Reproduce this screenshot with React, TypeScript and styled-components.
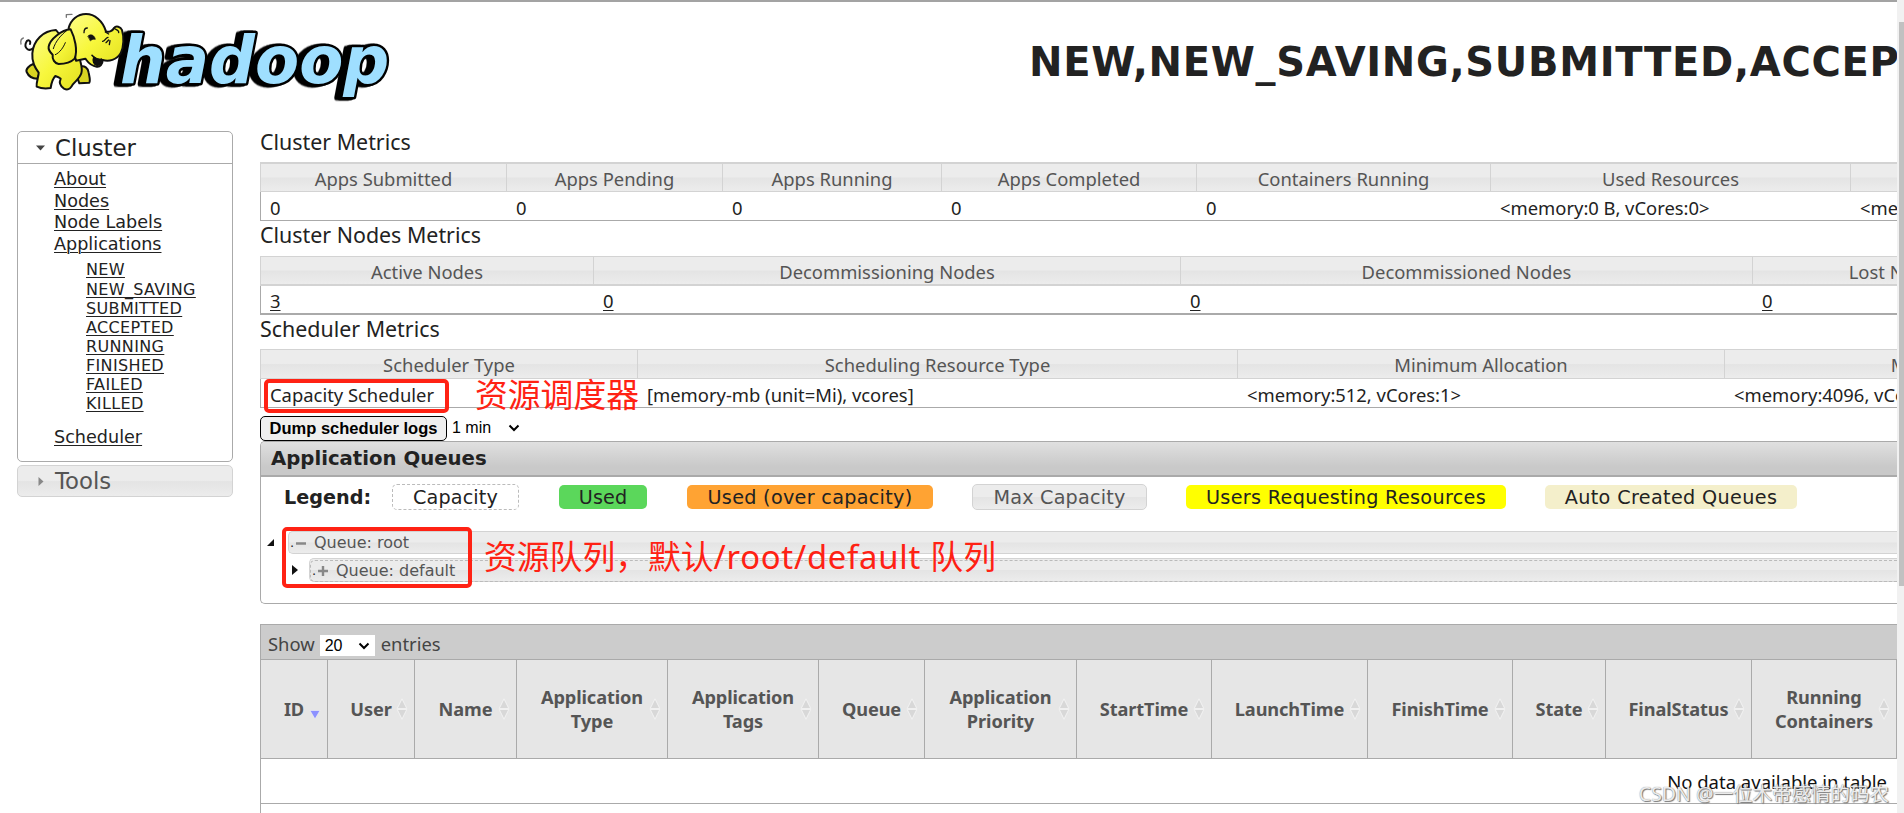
import React from "react";
import styled, { createGlobalStyle, css } from "styled-components";

const verdana = `"DejaVu Sans", Verdana, sans-serif`;
const segoe = `"Noto Sans", "Noto Sans CJK SC", sans-serif`;
const arial = `"Liberation Sans", Arial, sans-serif`;

const Global = createGlobalStyle`
  html, body { margin: 0; background: #fff; overflow: hidden; }
  *, *::before, *::after { box-sizing: border-box; }
  a { color: inherit; text-decoration: underline; text-decoration-thickness: 1px; text-underline-offset: 2px; }
`;

const glass = css`
  background: linear-gradient(#ececec 0%, #ececec 48%, #e4e4e4 52%, #ececec 100%);
`;

const Page = styled.div`
  position: relative;
  display: flex;
  width: 1904px;
  height: 813px;
  overflow: hidden;
  color: #222;
  background: #fff;
  font-family: ${verdana};
`;

const Content = styled.div`
  width: 1897px;
  overflow: hidden;
  border-top: 2px solid #a3a3a3;
`;

const ScrollTrack = styled.div`
  flex: 1;
  padding: 22px 0 0 2px;
  background: #f1f1f1;
`;

const ScrollThumb = styled.div`
  height: 564px;
  background: #c1c1c1;
`;

const Header = styled.header`
  display: flex;
  height: 120px;
`;

const Logo = styled.svg`
  display: block;
  flex: none;
  width: 420px;
  height: 120px;
  margin-top: -2px;
`;

const LogoText = styled.text`
  font: oblique bold 200px ${verdana};
  fill: #9fdfff;
  stroke: #000;
  stroke-width: 15px;
  stroke-linejoin: round;
  paint-order: stroke;
  filter: drop-shadow(-9px 2px 0 #000) drop-shadow(-9px 1px 0 #000);
`;

const Title = styled.h1`
  margin: 35px 0 0 609px;
  font-size: 40px;
  line-height: 50px;
  font-weight: bold;
  white-space: nowrap;
  letter-spacing: 0.68px;
`;

const Body = styled.div`
  display: flex;
`;

const Side = styled.nav`
  width: 216px;
  margin: 9px 27px 0 17px;
  flex: none;
`;

const SideHead = styled.div<{ $closed?: boolean }>`
  display: flex;
  align-items: center;
  height: ${(p) => (p.$closed ? 32 : 31)}px;
  padding-left: ${(p) => (p.$closed ? 20 : 18)}px;
  font-size: 22.8px;
  color: #222;
  ${(p) =>
    p.$closed &&
    css`
      ${glass}
      color: #555;
      border: 1px solid #d3d3d3;
      border-radius: 5px;
      margin-top: 3px;
    `}

  svg {
    margin-right: ${(p) => (p.$closed ? 11 : 10)}px;
  }
`;

const SideBox = styled.div`
  height: 331px;
  border: 1px solid #aaa;
  border-radius: 5px;
`;

const SideBody = styled.div`
  border-top: 1px solid #aaa;
  padding: 5px 0 0 36px;
`;

const NavItem = styled.div`
  height: 21.6px;
  font-size: 17.6px;
  line-height: 21.6px;
`;

const NavSub = styled.div`
  margin: 5px 0 13px;
  padding-left: 32px;
  font-size: 16px;
  line-height: 19.15px;
  letter-spacing: 0.35px;
`;

const Main = styled.main`
  width: 1637px;
  flex: none;
`;

const SectionTitle = styled.div<{ $gap: number; $top?: number }>`
  margin: ${(p) => p.$top ?? 0}px 0 ${(p) => p.$gap}px;
  height: 28px;
  font: 21.4px/28px ${segoe};
`;

const Grid = styled.div<{ $cols: string; $bottom: number }>`
  display: grid;
  width: 1637px;
  overflow: hidden;
  grid-template-columns: ${(p) => p.$cols};
  border-bottom: ${(p) => p.$bottom}px solid #aaa;
  font-family: ${segoe};
  font-size: 18.4px;
  white-space: nowrap;
`;

const HeadCell = styled.div<{ $t: number; $b: number; $h: number }>`
  ${glass}
  height: ${(p) => p.$h}px;
  display: flex;
  align-items: center;
  justify-content: center;
  padding-top: 1px;
  color: #555;
  border-top: ${(p) => p.$t}px solid #d3d3d3;
  border-bottom: ${(p) => p.$b}px solid #d3d3d3;
  border-left: 1px solid #d3d3d3;
`;

const Cell = styled.div<{ $h: number; $first: boolean }>`
  height: ${(p) => p.$h}px;
  display: flex;
  align-items: center;
  padding: 2px 0 0 9px;
  border-left: 1px solid ${(p) => (p.$first ? "#aaa" : "transparent")};
`;

const Controls = styled.div`
  display: flex;
  height: 33px;
  padding-top: 8px;
`;

const DumpButton = styled.button`
  width: 187px;
  height: 25px;
  padding: 0;
  border: 1px solid #000;
  border-radius: 5px;
  background: #efefef;
  color: #000;
  font: bold 16.5px/21px ${arial};
  white-space: nowrap;
`;

const Select = styled.div<{ $boxed?: boolean }>`
  display: flex;
  align-items: center;
  justify-content: space-between;
  color: #000;
  font: 16px/20px ${arial};
  ${(p) =>
    p.$boxed
      ? css`
          width: 55px;
          height: 21px;
          margin: 6px 6px 0 5px;
          padding: 1px 5px 0;
          background: #fff;
        `
      : css`
          width: 68px;
          height: 24px;
          margin-left: 5px;
        `}
`;

const Panel = styled.section`
  height: 163px;
  border: 1px solid #aaa;
  border-right: 0;
  border-radius: 5px 0 0 5px;
  overflow: hidden;
`;

const PanelHead = styled.div`
  height: 35px;
  padding: 0 0 0 10px;
  border-bottom: 2px solid #aaa;
  background: linear-gradient(#e0e0e0, #c9c9c9 75%);
  font-size: 19.7px;
  line-height: 34px;
  font-weight: bold;
`;

const LegendRow = styled.div`
  display: flex;
  align-items: center;
  height: 26px;
  margin-top: 7px;
  padding-left: 23px;
  font-size: 19.2px;
  white-space: nowrap;
`;

const LegendLabel = styled.b`
  width: 108px;
`;

const Chip = styled.span<{ $w: number; $gap: number; $kind: string; $track: number }>`
  width: ${(p) => p.$w}px;
  margin-right: ${(p) => p.$gap}px;
  letter-spacing: ${(p) => p.$track}px;
  flex: none;
  text-align: center;
  border-radius: 5px;
  height: 24px;
  line-height: 26px;
  ${(p) =>
    p.$kind === "dashed"
      ? css`
          height: 26px;
          border: 1px dashed #bbb;
        `
      : p.$kind === "glass"
      ? css`
          ${glass}
          height: 26px;
          border: 1px solid #d3d3d3;
          color: #555;
        `
      : css`
          background: ${p.$kind};
        `}
`;

const Tree = styled.div`
  margin-top: 21px;
  font-size: 16px;
  color: #555;
`;

const TreeLine = styled.div<{ $indent: number }>`
  display: flex;
  align-items: center;
  padding-left: ${(p) => p.$indent}px;
`;

const TreeBar = styled.div<{ $nested?: boolean }>`
  ${glass}
  display: flex;
  align-items: center;
  flex: 1;
  border: 1px solid #d3d3d3;
  border-right: 0;
  border-radius: 5px 0 0 5px;
  height: ${(p) => (p.$nested ? 24 : 23)}px;
  line-height: 21px;
`;

const TreeDash = styled.div`
  display: flex;
  align-items: center;
  flex: 1;
  height: 22px;
  margin-top: 1px;
  border: 1px dashed #bbb;
  border-right: 0;
  border-radius: 5px 0 0 5px;
`;

const TreeArrow = styled.svg`
  flex: none;
  margin-right: 14px;
`;

const NestedArrow = styled(TreeArrow)`
  margin-right: 11px;
`;

const TreeGap = styled.div`
  height: 4px;
`;

const TreeIcon = styled.svg`
  flex: none;
  margin: 0 8px 0 1px;
`;

const Dot = styled.span`
  width: 6px;
  flex: none;
  color: #222;
  font-size: 13px;
  padding-left: 1px;
`;

const Apps = styled.section`
  margin-top: 20px;
  border: 1px solid #aaa;
  border-right: 0;
  height: 220px;
  font-family: ${segoe};
`;

const AppsBar = styled.div`
  display: flex;
  align-items: center;
  height: 35px;
  padding: 0 0 0 7px;
  background: #ccc;
  color: #444;
  font-size: 18.4px;
  border-bottom: 1px solid #aaa;

  & > span {
    padding-top: 3px;
  }
`;

const AppsHead = styled.div`
  display: grid;
  grid-template-columns: 67px 87px 102px 151px 151px 106px 152px 135px 156px 145px 93px 146px 145px;
  height: 99px;
  background: #e6e6e6;
  border-bottom: 1px solid #aaa;
`;

const AppsTh = styled.div`
  position: relative;
  display: flex;
  align-items: center;
  justify-content: center;
  border-right: 1px solid #aaa;
  color: #555;
  font-weight: bold;
  font-size: 18.2px;
  line-height: 24px;
  text-align: center;
  letter-spacing: -0.1px;
`;

const SortMark = styled.svg`
  position: absolute;
  right: 6px;
  top: 38px;
`;

const EmptyRow = styled.div`
  height: 45px;
  padding: 9px 10px 0 0;
  border-bottom: 1px solid #aaa;
  color: #111;
  font-size: 18.5px;
  line-height: 28px;
  text-align: right;
`;

const RedBox = styled.div<{ $x: number; $y: number; $w: number; $h: number }>`
  position: absolute;
  left: ${(p) => p.$x}px;
  top: ${(p) => p.$y}px;
  width: ${(p) => p.$w}px;
  height: ${(p) => p.$h}px;
  border: 4px solid #ff2214;
  border-radius: 5px;
`;

const RedNote = styled.div<{ $x: number; $y: number }>`
  position: absolute;
  left: ${(p) => p.$x}px;
  top: ${(p) => p.$y}px;
  color: #ff2214;
  font: 32.8px/44px ${segoe};
  white-space: nowrap;

  span {
    letter-spacing: 0.75px;
  }
`;

const Watermark = styled.div`
  position: absolute;
  right: 15px;
  top: 780px;
  font: 19.5px/28px ${segoe};
  color: rgba(255, 255, 255, 0.85);
  text-shadow: 1px 1px 1px #777, 0 0 1px #777;
  white-space: nowrap;
`;

const Chevron = () => (
  <svg width="12" height="8" viewBox="0 0 12 8">
    <path d="M1.5 1.5 L6 6 L10.5 1.5" fill="none" stroke="#000" strokeWidth="2" />
  </svg>
);

const HadoopLogo = () => (
  <Logo viewBox="0 0 1260 360">
    <defs>
      <linearGradient id="skin" x1="0" y1="0" x2="1" y2="1">
        <stop offset="0" stopColor="#fdfd8a" />
        <stop offset="0.5" stopColor="#f7f73c" />
        <stop offset="1" stopColor="#e3df1e" />
      </linearGradient>
    </defs>
    <LogoText x="360" y="250" textLength="808" lengthAdjust="spacingAndGlyphs">
      hadoop
    </LogoText>
    <g fill="url(#skin)" stroke="#111" strokeWidth="6" strokeLinejoin="round" strokeLinecap="round">
      <path d="M98 146 C84 156 72 142 78 128 C82 117 94 120 90 132" fill="none" />
      <path d="M100 192 C88 196 76 208 80 216 C86 230 98 236 112 236 L124 206 Z" fill="#d9d422" />
      <path d="M240 200 C254 196 264 204 266 218 C268 230 272 240 268 248 L238 250 L228 222 Z" fill="#d9d422" />
      <path d="M168 90 C130 92 100 120 97 160 C95 188 106 204 116 218 C116 232 108 246 110 260 C124 266 140 266 152 264 C154 250 158 236 166 228 C172 230 178 232 182 236 C176 250 180 258 192 266 C204 272 212 266 218 254 C226 244 240 234 244 220 C248 206 244 196 240 180 Z" />
      <path d="M206 84 C212 60 232 42 258 42 C284 42 308 62 318 94 C328 98 338 92 342 84 C348 76 362 80 366 90 C372 110 372 140 362 160 C350 180 326 186 308 180 C308 192 300 202 290 200 C270 198 262 184 256 176 L228 182 Z" />
      <path d="M212 88 C184 90 150 118 146 140 C144 152 152 158 158 164 C156 178 164 190 176 192 C194 192 212 188 224 176 C234 150 224 112 212 88 Z" />
      <path d="M282 172 C278 182 282 194 292 196 C302 194 306 186 304 178 C294 182 288 178 282 172 Z" fill="#111" />
      <path d="M200 92 C184 104 166 124 160 146" fill="none" strokeWidth="3" />
      <path d="M196 128 C190 142 180 158 166 164" fill="none" strokeWidth="3" />
      <path d="M252 98 C252 88 256 84 262 84" fill="none" strokeWidth="4" />
      <path d="M316 96 L326 102 M308 124 C316 122 316 114 324 112 M318 128 L326 120 M328 134 L330 122" fill="none" strokeWidth="4" />
      <path d="M264 108 C272 100 284 106 286 118 C278 116 274 120 272 122 Z" fill="#111" strokeWidth="2" />
      <path d="M342 84 C346 90 358 88 356 98" fill="none" strokeWidth="4" />
      <path d="M276 166 C284 176 298 180 308 180" fill="none" strokeWidth="5" />
      <path d="M199 52 L199 44 L216 43 M63 132 C61 122 64 116 70 114" fill="none" stroke="#777" strokeWidth="4" />
    </g>
  </Logo>
);

const states = ["NEW", "NEW_SAVING", "SUBMITTED", "ACCEPTED", "RUNNING", "FINISHED", "FAILED", "KILLED"];

type MetricsProps = {
  cols: string;
  heads: string[];
  values: string[];
  top?: number;
  mid?: number;
  bottom?: number;
  headHeight: number;
  cellHeight: number;
  linked?: boolean;
};

const Metrics = ({ cols, heads, values, top = 1, mid = 1, bottom = 1, headHeight, cellHeight, linked }: MetricsProps) => (
  <Grid $cols={cols} $bottom={bottom}>
    {heads.map((h) => (
      <HeadCell key={h} $t={top} $b={mid} $h={headHeight}>
        {h}
      </HeadCell>
    ))}
    {values.map((v, i) => (
      <Cell key={i} $h={cellHeight} $first={i === 0}>
        {linked ? <a>{v}</a> : v}
      </Cell>
    ))}
  </Grid>
);

const chips: { label: string; w: number; gap: number; kind: string; track: number }[] = [
  { label: "Capacity", w: 127, gap: 40, kind: "dashed", track: 0.15 },
  { label: "Used", w: 88, gap: 40, kind: "#5bd75b", track: 0.15 },
  { label: "Used (over capacity)", w: 246, gap: 39, kind: "#ffa333", track: 0.3 },
  { label: "Max Capacity", w: 175, gap: 39, kind: "glass", track: 0.2 },
  { label: "Users Requesting Resources", w: 320, gap: 39, kind: "#ffff00", track: 0.33 },
  { label: "Auto Created Queues", w: 252, gap: 0, kind: "#f4efcb", track: 0.36 },
];

const columns = [
  "ID",
  "User",
  "Name",
  "Application\nType",
  "Application\nTags",
  "Queue",
  "Application\nPriority",
  "StartTime",
  "LaunchTime",
  "FinishTime",
  "State",
  "FinalStatus",
  "Running\nContainers",
];

export default function App() {
  return (
    <Page>
      <Global />
      <Content>
        <Header>
          <HadoopLogo />
          <Title>NEW,NEW_SAVING,SUBMITTED,ACCEPTED</Title>
        </Header>
        <Body>
          <Side>
            <SideBox>
              <SideHead>
                <svg width="9" height="6" viewBox="0 0 9 6">
                  <path d="M0 0.5H9L4.5 5.5Z" fill="#444" />
                </svg>
                Cluster
              </SideHead>
              <SideBody>
                {["About", "Nodes", "Node Labels", "Applications"].map((t) => (
                  <NavItem key={t}>
                    <a>{t}</a>
                  </NavItem>
                ))}
                <NavSub>
                  {states.map((s) => (
                    <div key={s}>
                      <a>{s}</a>
                    </div>
                  ))}
                </NavSub>
                <NavItem>
                  <a>Scheduler</a>
                </NavItem>
              </SideBody>
            </SideBox>
            <SideHead $closed>
              <svg width="6" height="9" viewBox="0 0 6 9">
                <path d="M0.5 0V9L5.5 4.5Z" fill="#888" />
              </svg>
              Tools
            </SideHead>
          </Side>
          <Main>
            <SectionTitle $top={6} $gap={6}>Cluster Metrics</SectionTitle>
            <Metrics
              cols="246px 216px 219px 255px 294px 360px 47px"
              heads={["Apps Submitted", "Apps Pending", "Apps Running", "Apps Completed", "Containers Running", "Used Resources", " "]}
              values={["0", "0", "0", "0", "0", "<memory:0 B, vCores:0>", "<memory"]}
              top={2}
              headHeight={30}
              cellHeight={28}
            />
            <SectionTitle $gap={7}>Cluster Nodes Metrics</SectionTitle>
            <Metrics
              cols="333px 587px 572px 289px"
              heads={["Active Nodes", "Decommissioning Nodes", "Decommissioned Nodes", "Lost Nodes"]}
              values={["3", "0", "0", "0"]}
              mid={2}
              bottom={2}
              headHeight={30}
              cellHeight={27}
              linked
            />
            <SectionTitle $gap={6}>Scheduler Metrics</SectionTitle>
            <Metrics
              cols="377px 600px 487px 510px"
              heads={["Scheduler Type", "Scheduling Resource Type", "Minimum Allocation", "Maximum Allocation"]}
              values={["Capacity Scheduler", "[memory-mb (unit=Mi), vcores]", "<memory:512, vCores:1>", "<memory:4096, vCores:4>"]}
              headHeight={30}
              cellHeight={28}
            />
            <Controls>
              <DumpButton>Dump scheduler logs</DumpButton>
              <Select>
                1 min <Chevron />
              </Select>
            </Controls>
            <Panel>
              <PanelHead>Application Queues</PanelHead>
              <LegendRow>
                <LegendLabel>Legend:</LegendLabel>
                {chips.map((c) => (
                  <Chip key={c.label} $w={c.w} $gap={c.gap} $kind={c.kind} $track={c.track}>
                    {c.label}
                  </Chip>
                ))}
              </LegendRow>
              <Tree>
                <TreeLine $indent={6}>
                  <TreeArrow width="7" height="7" viewBox="0 0 7 7">
                    <path d="M7 0V7H0Z" fill="#111" />
                  </TreeArrow>
                  <TreeBar>
                    <Dot>.</Dot>
                    <TreeIcon width="10" height="10" viewBox="0 0 10 10">
                      <path d="M0 5.5H10" stroke="#888" strokeWidth="2.4" />
                    </TreeIcon>
                    Queue: root
                  </TreeBar>
                </TreeLine>
                <TreeGap />
                <TreeLine $indent={31}>
                  <NestedArrow width="6" height="10" viewBox="0 0 6 10">
                    <path d="M0 0L6 5L0 10Z" fill="#111" />
                  </NestedArrow>
                  <TreeBar $nested>
                    <TreeDash>
                      <Dot>.</Dot>
                      <TreeIcon width="10" height="10" viewBox="0 0 10 10">
                        <path d="M0 5H10M5 0V10" stroke="#888" strokeWidth="2.4" />
                      </TreeIcon>
                      Queue: default
                    </TreeDash>
                  </TreeBar>
                </TreeLine>
              </Tree>
            </Panel>
            <Apps>
              <AppsBar>
                <span>Show</span>
                <Select $boxed>
                  20 <Chevron />
                </Select>
                <span>entries</span>
              </AppsBar>
              <AppsHead>
                {columns.map((c, i) => (
                  <AppsTh key={c}>
                    <span>
                      {c.split("\n").map((part) => (
                        <div key={part}>{part}</div>
                      ))}
                    </span>
                    {i === 0 ? (
                      <SortMark width="12" height="22" viewBox="0 0 12 22">
                        <path d="M1 12.5H11L6 21Z" fill="#8c91ff" stroke="#f4f4f4" strokeWidth="0.6" />
                      </SortMark>
                    ) : (
                      <SortMark width="12" height="22" viewBox="0 0 12 22">
                        <path d="M6 0.8L10.8 10.6H1.2Z M6 21.2L10.8 11.4H1.2Z" fill="#d8d8d8" stroke="#f2f2f2" strokeWidth="1" />
                      </SortMark>
                    )}
                  </AppsTh>
                ))}
              </AppsHead>
              <EmptyRow>No data available in table</EmptyRow>
            </Apps>
          </Main>
        </Body>
      </Content>
      <ScrollTrack>
        <ScrollThumb />
      </ScrollTrack>
      <RedBox $x={264} $y={379} $w={185} $h={34} />
      <RedNote $x={475} $y={373}>资源调度器</RedNote>
      <RedBox $x={282} $y={527} $w={190} $h={61} />
      <RedNote $x={484} $y={535}>
        资源队列，默认<span>/root/default </span>队列
      </RedNote>
      <Watermark>CSDN @一位木带感情的码农</Watermark>
    </Page>
  );
}
